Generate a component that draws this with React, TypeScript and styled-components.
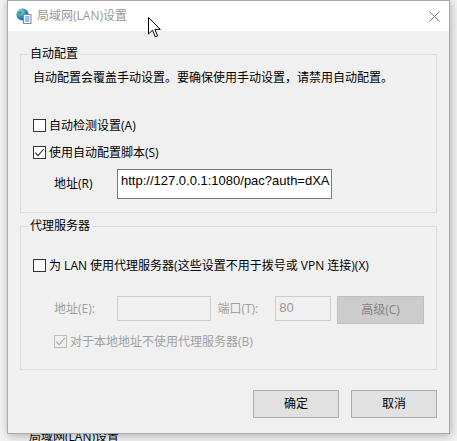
import React from "react";
import styled, { createGlobalStyle } from "styled-components";

const GlobalStyle = createGlobalStyle`
  html, body { margin: 0; padding: 0; }
  body {
    width: 457px;
    height: 441px;
    overflow: hidden;
    background: #f2f2f2;
    font-family: "Open Sans", "Noto Sans CJK SC", sans-serif;
    font-size: 12px;
    color: #000;
  }
  * { box-sizing: border-box; }
`;

const Desktop = styled.div`
  position: relative;
  width: 457px;
  height: 441px;
  overflow: hidden;
  background: #f3f3f3;
`;

const BehindCaption = styled.div`
  position: absolute;
  left: 29px;
  top: 429px;
  font-size: 12px;
  line-height: 16px;
  color: #000;
`;

const Dialog = styled.div`
  position: absolute;
  left: 7px;
  top: 0;
  width: 443px;
  height: 434px;
  border: 1px solid #a9a9a9;
  background: #f0f0f0;
  box-shadow: 1px 2px 9px rgba(0, 0, 0, 0.28);
  display: flex;
  flex-direction: column;
`;

const TitleBar = styled.div`
  height: 30px;
  background: #fff;
  display: flex;
  align-items: center;
  padding-left: 8px;
  padding-right: 9px;
  flex-shrink: 0;
`;

const TitleText = styled.span`
  margin-left: 5px;
  color: #999;
  font-size: 12px;
  line-height: 16px;
  flex: 1;
`;

const CloseIcon = styled.svg`
  width: 11px;
  height: 11px;
  display: block;
`;

const Body = styled.div`
  flex: 1;
  display: flex;
  flex-direction: column;
  padding: 23px 12px 0 12px;
`;

const GroupBox = styled.div<{ $h: number; $mt?: number }>`
  height: ${(p) => p.$h}px;
  margin-top: ${(p) => p.$mt ?? 0}px;
  border: 1px solid #dcdcdc;
  display: flex;
  flex-direction: column;
  padding: 0 12px;
`;

const Legend = styled.div`
  align-self: flex-start;
  margin: -9px 0 0 -5px;
  padding: 0 2px;
  background: #f0f0f0;
  line-height: 16px;
  height: 16px;
`;

const Description = styled.div`
  margin-top: 8px;
  line-height: 16px;
  white-space: nowrap;
`;

const CheckRow = styled.label<{ $mt: number; $indent?: number; $disabled?: boolean }>`
  display: flex;
  align-items: center;
  height: 16px;
  margin-top: ${(p) => p.$mt}px;
  margin-left: ${(p) => p.$indent ?? 0}px;
  color: ${(p) => (p.$disabled ? "#a0a0a0" : "#000")};
  white-space: nowrap;
`;

const Box = styled.span<{ $disabled?: boolean }>`
  width: 13px;
  height: 13px;
  flex-shrink: 0;
  border: 1px solid ${(p) => (p.$disabled ? "#bcbcbc" : "#333")};
  background: ${(p) => (p.$disabled ? "#f0f0f0" : "#fff")};
  margin-right: 3px;
  display: flex;
  align-items: center;
  justify-content: center;
`;

const FieldRow = styled.div<{ $mt: number }>`
  display: flex;
  align-items: flex-start;
  margin-top: ${(p) => p.$mt}px;
  margin-left: 21px;
`;

const FieldLabel = styled.span<{ $w: number; $h: number; $disabled?: boolean }>`
  width: ${(p) => p.$w}px;
  line-height: ${(p) => p.$h}px;
  color: ${(p) => (p.$disabled ? "#a0a0a0" : "#000")};
  white-space: nowrap;
`;

const TextBox = styled.div<{ $w: number; $h: number; $disabled?: boolean }>`
  width: ${(p) => p.$w}px;
  height: ${(p) => p.$h}px;
  border: 1px solid ${(p) => (p.$disabled ? "#cccccc" : "#7a7a7a")};
  background: ${(p) => (p.$disabled ? "#f0f0f0" : "#fff")};
  color: ${(p) => (p.$disabled ? "#9a9a9a" : "#000")};
  font-family: "Liberation Sans", "Noto Sans CJK SC", sans-serif;
  font-size: 13px;
  line-height: 16px;
  padding: 3px 0 0 3px;
  overflow: hidden;
  white-space: nowrap;
`;

const Gap = styled.span<{ $w: number }>`
  width: ${(p) => p.$w}px;
  flex-shrink: 0;
`;

const Button = styled.button<{ $disabled?: boolean }>`
  width: ${(p) => (p.$disabled ? 87 : 86)}px;
  height: 28px;
  border: 1px solid ${(p) => (p.$disabled ? "#bfbfbf" : "#adadad")};
  background: ${(p) => (p.$disabled ? "#cccccc" : "#e1e1e1")};
  color: ${(p) => (p.$disabled ? "#838383" : "#000")};
  font-family: "Open Sans", "Noto Sans CJK SC", sans-serif;
  font-size: 12px;
  line-height: 16px;
  padding: 0;
  border-radius: 0;
  flex-shrink: 0;
`;

const ButtonBar = styled.div`
  display: flex;
  justify-content: flex-end;
  gap: 12px;
  margin-top: 20px;
`;

const Cursor = styled.svg`
  position: absolute;
  left: 148px;
  top: 17px;
  width: 14px;
  height: 21px;
`;

const Check = ({ color }: { color: string }) => (
  <svg width="11" height="11" viewBox="0 0 11 11">
    <polyline points="1.2,5.6 4,8.6 9.8,2" fill="none" stroke={color} strokeWidth="1.1" />
  </svg>
);

const LanIcon = () => (
  <svg width="16" height="16" viewBox="0 0 16 16">
    <defs>
      <radialGradient id="g" cx="0.35" cy="0.3" r="0.8">
        <stop offset="0" stopColor="#9fe0ff" />
        <stop offset="0.5" stopColor="#2a8fd6" />
        <stop offset="1" stopColor="#0b4f9a" />
      </radialGradient>
    </defs>
    <circle cx="6.5" cy="6.5" r="6" fill="url(#g)" />
    <path d="M3 3.5 C4.5 2.5 6 3 6.5 4.5 C6 6 4.5 6 4 7.5 C3 8 2 6.5 2 5 Z" fill="#4caf3f" />
    <path d="M8 8 C9.5 7.5 10.5 8.5 10 10 C9 11 8 10.5 7.8 9.5 Z" fill="#4caf3f" />
    <rect x="7.5" y="6.5" width="7.5" height="9" fill="#fff" stroke="#7a8a9a" strokeWidth="1" />
    <line x1="9" y1="9" x2="13.5" y2="9" stroke="#3a7bd5" strokeWidth="1" />
    <line x1="9" y1="11" x2="13.5" y2="11" stroke="#3a7bd5" strokeWidth="1" />
    <line x1="9" y1="13" x2="13.5" y2="13" stroke="#3a7bd5" strokeWidth="1" />
  </svg>
);

export default function App() {
  return (
    <Desktop>
      <GlobalStyle />
      <BehindCaption>局域网(LAN)设置</BehindCaption>
      <Dialog>
        <TitleBar>
          <LanIcon />
          <TitleText>局域网(LAN)设置</TitleText>
          <CloseIcon viewBox="0 0 11 11">
            <path d="M0.5 0.5 L10.5 10.5 M10.5 0.5 L0.5 10.5" stroke="#777" strokeWidth="1" />
          </CloseIcon>
        </TitleBar>
        <Body>
          <GroupBox $h={159}>
            <Legend>自动配置</Legend>
            <Description>自动配置会覆盖手动设置。要确保使用手动设置，请禁用自动配置。</Description>
            <CheckRow $mt={31}>
              <Box />
              自动检测设置(A)
            </CheckRow>
            <CheckRow $mt={11}>
              <Box>
                <Check color="#333" />
              </Box>
              使用自动配置脚本(S)
            </CheckRow>
            <FieldRow $mt={9}>
              <FieldLabel $w={63} $h={30}>地址(R)</FieldLabel>
              <TextBox $w={215} $h={30}>http://127.0.0.1:1080/pac?auth=dXA</TextBox>
            </FieldRow>
          </GroupBox>
          <GroupBox $h={144} $mt={13}>
            <Legend>代理服务器</Legend>
            <CheckRow $mt={23}>
              <Box />
              为 LAN 使用代理服务器(这些设置不用于拨号或 VPN 连接)(X)
            </CheckRow>
            <FieldRow $mt={23}>
              <FieldLabel $w={63} $h={25} $disabled>地址(E):</FieldLabel>
              <TextBox $w={95} $h={25} $disabled />
              <Gap $w={6} />
              <FieldLabel $w={58} $h={25} $disabled>端口(T):</FieldLabel>
              <TextBox $w={56} $h={25} $disabled>80</TextBox>
              <Gap $w={6} />
              <Button $disabled disabled>高级(C)</Button>
            </FieldRow>
            <CheckRow $mt={9} $indent={21} $disabled>
              <Box $disabled>
                <Check color="#a8a8a8" />
              </Box>
              对于本地地址不使用代理服务器(B)
            </CheckRow>
          </GroupBox>
          <ButtonBar>
            <Button>确定</Button>
            <Button>取消</Button>
          </ButtonBar>
        </Body>
      </Dialog>
      <Cursor viewBox="0 0 14 21">
        <path
          d="M0.5 0.5 L0.5 17 L4.5 13.2 L7.3 19.8 L9.6 18.8 L6.9 12.4 L12.3 12.4 Z"
          fill="#fff"
          stroke="#000"
          strokeWidth="1"
          strokeLinejoin="miter"
        />
      </Cursor>
    </Desktop>
  );
}
